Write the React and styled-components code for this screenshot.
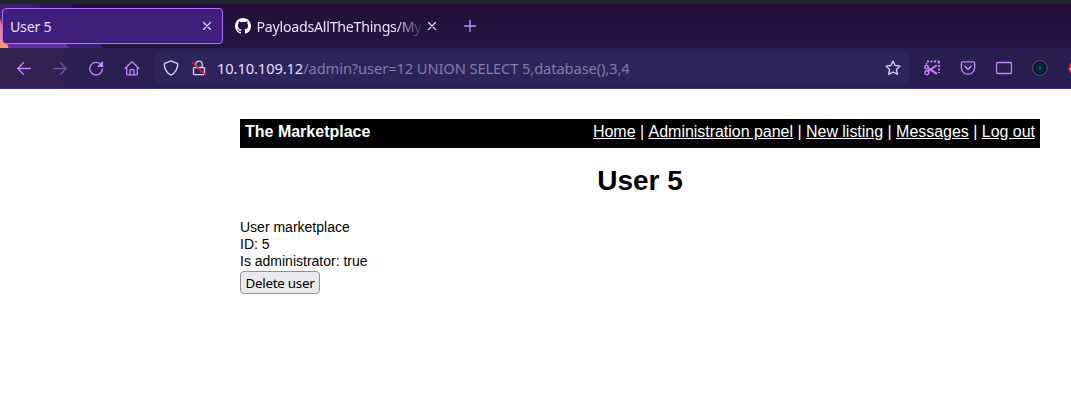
import React from "react";
import styled, { createGlobalStyle } from "styled-components";

const GlobalStyle = createGlobalStyle`
  * { box-sizing: border-box; }
  html, body { margin: 0; height: 100%; background: #fff; overflow: hidden; }
  button { font: inherit; padding: 0; margin: 0; }
`;

const Window = styled.div`
  display: flex;
  flex-direction: column;
  width: 1071px;
  height: 408px;
  overflow: hidden;
  background: #fff;
  font-family: "Noto Sans", sans-serif;
`;

const Chrome = styled.header`
  position: relative;
  flex: none;
  height: 89px;
  border-top: 4px solid #23252e;
  border-bottom: 1px solid #40307a;
  background: #25143f;
  overflow: hidden;
`;

const ThemeArt = styled.svg`
  position: absolute;
  left: 0;
  top: 0;
`;

const TabStrip = styled.div`
  position: relative;
  display: flex;
  align-items: center;
  height: 44px;
  padding: 0 0 0 2px;
`;

const Tab = styled.div`
  display: flex;
  align-items: center;
  width: ${(p) => p.$width}px;
  height: 36px;
  padding: 0 7px 0 ${(p) => (p.$active ? 7 : 11)}px;
  border: 1px solid ${(p) => (p.$active ? "#ac70ff" : "transparent")};
  border-radius: 4px;
  background: ${(p) => (p.$active ? "#3e207c" : "transparent")};
  color: #e7dfff;
`;

const TabTitle = styled.span`
  flex: 1;
  min-width: 0;
  overflow: hidden;
  white-space: nowrap;
  font-size: 14.2px;
  letter-spacing: -0.25px;
  line-height: 22px;
  padding-top: 2px;
  margin-left: ${(p) => (p.$fade ? 5.5 : 0)}px;
  ${(p) => p.$fade && "mask-image: linear-gradient(to left, transparent, #000 28px);"}
`;

const IconButton = styled.button`
  display: flex;
  align-items: center;
  justify-content: center;
  flex: none;
  width: ${(p) => p.$width || 36}px;
  height: 32px;
  border: 0;
  background: none;
  color: ${(p) => p.$color || "#c487ff"};
  opacity: ${(p) => (p.$dim ? 0.45 : 1)};
`;

const Toolbar = styled.div`
  position: relative;
  display: flex;
  align-items: center;
  height: 40px;
  padding-left: 6px;
  background: linear-gradient(to right, #35234f, #2b1f52 90px, #2a1e50);
`;

const AddressBar = styled.div`
  display: flex;
  align-items: center;
  flex: none;
  width: 754px;
  height: 32px;
  margin: 0 5px 0 6px;
  padding-left: 2px;
  border-radius: 4px;
  background: #2e245c;
`;

const Url = styled.div`
  flex: 1;
  padding-left: 4px;
  font-size: 14.67px;
  letter-spacing: -0.09px;
  line-height: 22px;
  white-space: nowrap;
  color: #837aa5;
  b { font-weight: 400; color: #e7dfff; }
`;

const Page = styled.main`
  width: 800px;
  margin: 30px 0 0 240px;
  font: 14px/17px "Liberation Sans", Arial, sans-serif;
  color: #000;
`;

const SiteBar = styled.nav`
  display: flex;
  justify-content: space-between;
  height: 29px;
  padding: 3px 5px 0;
  background: #000;
  color: #fff;
  font-size: 16px;
  line-height: 19px;
`;

const SiteLink = styled.a`
  color: #fff;
  letter-spacing: -0.03px;
  text-decoration: underline;
`;

const Heading = styled.h1`
  margin: 17px 0 22px;
  font-size: 28px;
  line-height: 32px;
  font-weight: 700;
  text-align: center;
`;

const DeleteButton = styled.button`
  display: block;
  width: 80px;
  height: 23px;
  margin-top: 1px;
  padding-top: 1px;
  border: 1px solid #8f8f9d;
  border-radius: 4px;
  background: #e9e9ed;
  color: #000;
  font: 13.33px/20px "Noto Sans", sans-serif;
  letter-spacing: -0.25px;
  white-space: nowrap;
`;

function Icon({ size = 16, width = 1.3, children }) {
  return (
    <svg
      width={size}
      height={size}
      viewBox={`0 0 ${size} ${size}`}
      fill="none"
      stroke="currentColor"
      strokeWidth={width}
      strokeLinecap="round"
      strokeLinejoin="round"
    >
      {children}
    </svg>
  );
}

const Close = () => <Icon width={1.1}><path d="M4.5 4.5l7 7M11.5 4.5l-7 7" /></Icon>;

const GitHubMark = () => (
  <svg width="16" height="16" viewBox="0 0 16 16" fill="#fff">
    <path d="M8 0C3.58 0 0 3.58 0 8c0 3.54 2.29 6.53 5.47 7.59.4.07.55-.17.55-.38 0-.19-.01-.82-.01-1.49-2.01.37-2.53-.49-2.69-.94-.09-.23-.48-.94-.82-1.13-.28-.15-.68-.52-.01-.53.63-.01 1.08.58 1.23.82.72 1.21 1.87.87 2.33.66.07-.52.28-.87.51-1.07-1.78-.2-3.64-.89-3.64-3.95 0-.87.31-1.59.82-2.15-.08-.2-.36-1.02.08-2.12 0 0 .67-.21 2.2.82A7.6 7.6 0 0 1 8 3.87c.68 0 1.36.09 2 .26 1.53-1.04 2.2-.82 2.2-.82.44 1.1.16 1.92.08 2.12.51.56.82 1.27.82 2.15 0 3.07-1.87 3.75-3.65 3.95.29.25.54.73.54 1.48 0 1.07-.01 1.93-.01 2.2 0 .21.15.46.55.38A8.01 8.01 0 0 0 16 8c0-4.42-3.58-8-8-8z" />
  </svg>
);

export default function App() {
  const links = ["Home", "Administration panel", "New listing", "Messages", "Log out"];
  return (
    <Window>
      <GlobalStyle />
      <Chrome>
        <ThemeArt width="1071" height="84">
          <defs>
            <linearGradient id="base" x2="0" y2="1">
              <stop stopColor="#23103a" />
              <stop offset="1" stopColor="#281a46" />
            </linearGradient>
            <linearGradient id="coral" x2="0" y2="1">
              <stop stopColor="#f46d78" />
              <stop offset="1" stopColor="#ff9b78" />
            </linearGradient>
            <linearGradient id="violet" x2="0" y2="1">
              <stop stopColor="#391c63" />
              <stop offset="1" stopColor="#6531ae" />
            </linearGradient>
            <linearGradient id="indigo" x2="0" y2="1">
              <stop stopColor="#2d154d" />
              <stop offset="1" stopColor="#3e1e78" />
            </linearGradient>
          </defs>
          <path fill="url(#base)" d="M0 0h1071v84H0z" />
          <path fill="url(#indigo)" d="M0 0h71l32 44H0z" />
          <path fill="url(#violet)" d="M0 0h38l31 44H0z" />
          <path fill="url(#coral)" d="M0 14l8.500 30H0z" />
        </ThemeArt>
        <TabStrip>
          <Tab $active $width={221}>
            <TabTitle>User 5</TabTitle>
            <Close />
          </Tab>
          <Tab $width={225}>
            <GitHubMark />
            <TabTitle $fade>PayloadsAllTheThings/My</TabTitle>
            <Close />
          </Tab>
          <IconButton $width={44}>
            <Icon width={1.4}><path d="M8 2.500v11M2.500 8h11" /></Icon>
          </IconButton>
        </TabStrip>
        <Toolbar>
          <IconButton>
            <Icon><path d="M14.4 8.5H1.7M7.4 2.8L1.7 8.5l5.7 5.7" /></Icon>
          </IconButton>
          <IconButton $dim>
            <Icon><path d="M1.6 8.5h12.7M8.6 2.8l5.7 5.7-5.7 5.7" /></Icon>
          </IconButton>
          <IconButton>
            <Icon>
              <path d="M12.3 3.9A6.3 6.3 0 1 0 14.4 9" />
              <path d="M14.5 2.2v4.2h-4.2z" fill="currentColor" />
            </Icon>
          </IconButton>
          <IconButton $width={35}>
            <Icon>
              <path d="M1.2 8.2l6.1-6a1 1 0 0 1 1.4 0l6.1 6M2.7 7v7.2a.7.7 0 0 0 .7.7h9.2a.7.7 0 0 0 .7-.7V7M6 14.7v-4a1 1 0 0 1 1-1h2a1 1 0 0 1 1 1v4" />
            </Icon>
          </IconButton>
          <AddressBar>
            <IconButton $width={28} $color="#d8cff2">
              <Icon><path d="M8 .9l6.2 2.4a.8.8 0 0 1 .5.8c-.1 5.2-2.2 8.9-6.7 11C3.500 13 1.400 9.300 1.300 4.100a.8.8 0 0 1 .5-.8z" /></Icon>
            </IconButton>
            <IconButton $width={28} $color="#d8cff2">
              <Icon>
                <path d="M4.800 5.500V4.300a3.200 3.200 0 0 1 6.400 0v3.200M3.500 7.500h9a1 1 0 0 1 1 1v5.200a1 1 0 0 1-1 1h-9a1 1 0 0 1-1-1V8.500a1 1 0 0 1 1-1z" />
                <path d="M1.500 2.500l13 12.500" stroke="#ff0d3f" strokeWidth="1.500" />
              </Icon>
            </IconButton>
            <Url><b>10.10.109.12</b>/admin?user=12 UNION SELECT 5,database(),3,4</Url>
            <IconButton $width={32} $color="#d8cff2">
              <Icon><path d="M8 1l2.100 4.500 4.900.6-3.600 3.400 1 4.900L8 12l-4.400 2.400 1-4.900L1 6.100l4.900-.6z" /></Icon>
            </IconButton>
          </AddressBar>
          <IconButton>
            <Icon width={1.4}>
              <path d="M3 1.500h12.500M15 1.500v11.500" strokeDasharray="2 1.500" strokeLinecap="butt" strokeWidth="1.900" />
              <path d="M4 11.200l8-5.400M4 8l8.500 5.600" strokeWidth="1.900" />
              <path d="M2.500 3.500v.5" strokeWidth="1.500" />
              <circle cx="2.500" cy="7.200" r="1.700" />
              <circle cx="2.800" cy="12.700" r="1.900" />
            </Icon>
          </IconButton>
          <IconButton>
            <Icon>
              <path d="M2.700 1.800h10.600a1.300 1.300 0 0 1 1.300 1.300v4.800a6.600 6.300 0 0 1-13.200 0V3.100a1.300 1.300 0 0 1 1.300-1.300z" />
              <path d="M4.800 6.300L8 9.400l3.200-3.100" strokeWidth="1.500" />
            </Icon>
          </IconButton>
          <IconButton>
            <Icon><rect x=".5" y="2.500" width="15" height="11" rx="1.200" /></Icon>
          </IconButton>
          <IconButton>
            <Icon width={1}>
              <circle cx="8" cy="8" r="7.300" fill="#081521" stroke="#456067" />
              <circle cx="8" cy="8" r="4.800" fill="#0b2838" stroke="#142638" />
              <circle cx="8" cy="8" r="1" fill="#2a819c" stroke="#18536a" />
            </Icon>
          </IconButton>
          <IconButton>
            <Icon>
              <circle cx="8" cy="8" r="7" fill="#e5111b" stroke="#e5111b" />
              <path d="M3 9l6-3" stroke="#fff" strokeWidth="2.500" />
            </Icon>
          </IconButton>
        </Toolbar>
      </Chrome>
      <Page>
        <SiteBar>
          <b>The Marketplace</b>
          <span>
            {links.map((label, i) => (
              <React.Fragment key={label}>
                {i > 0 && " | "}
                <SiteLink>{label}</SiteLink>
              </React.Fragment>
            ))}
          </span>
        </SiteBar>
        <Heading>User 5</Heading>
        <div>User marketplace</div>
        <div>ID: 5</div>
        <div>Is administrator: true</div>
        <DeleteButton>Delete user</DeleteButton>
      </Page>
    </Window>
  );
}
